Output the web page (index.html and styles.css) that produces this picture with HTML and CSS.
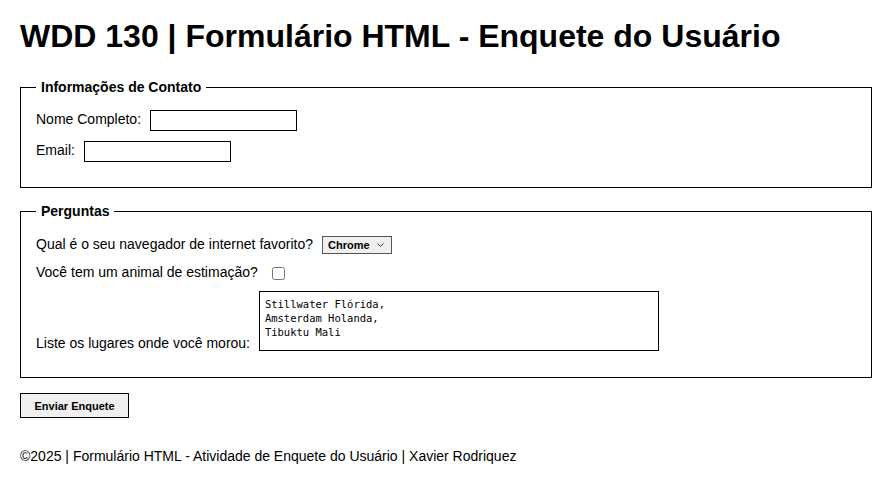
FILE: index.html
```html
<!DOCTYPE html>
<html lang="pt">
<head>
    <meta charset="UTF-8">
    <meta name="viewport" content="width=device-width, initial-scale=1.0">
    <title>WDD 130 | Formulário HTML</title>
    <link rel="stylesheet" href="styles.css">
</head>
<body>

    <h1>WDD 130 | Formulário HTML - Enquete do Usuário</h1>

    <form>
        <fieldset class="contato">
            <legend>Informações de Contato</legend>
            <div class="row">
                <label for="nome">Nome Completo:</label>
                <input type="text" id="nome">
            </div>
            <div class="row">
                <label for="email">Email:</label>
                <input type="email" id="email">
            </div>
        </fieldset>

        <fieldset class="perguntas">
            <legend>Perguntas</legend>
            <div class="row">
                <label for="navegador">Qual é o seu navegador de internet favorito?</label>
                <select id="navegador">
                    <option>Chrome</option>
                    <option>Firefox</option>
                    <option>Edge</option>
                    <option>Safari</option>
                </select>
            </div>
            <div class="row">
                <label for="animal">Você tem um animal de estimação?</label>
                <input type="checkbox" id="animal">
            </div>
            <div class="row rowText">
                <label for="lugares">Liste os lugares onde você morou:</label>
                <textarea id="lugares">Stillwater Flórida,
Amsterdam Holanda,
Tibuktu Mali</textarea>
            </div>
        </fieldset>

        <button type="submit">Enviar Enquete</button>
    </form>

    <footer>
        <p>&copy;2025 | Formulário HTML - Atividade de Enquete do Usuário | Xavier Rodriquez</p>
    </footer>

</body>
</html>
```

FILE: styles.css
```css
* {
    box-sizing: border-box;
}
body {
    margin: 0;
    padding: 0 20px;
    font-family: "Liberation Sans", Arial, sans-serif;
    font-size: 14px;
    color: #000;
}
h1 {
    font-size: 32px;
    margin: 18px 0 24px 0;
}
fieldset {
    margin: 0 0 15px 0;
    border: 1px solid #000;
}
.contato {
    padding: 15px 15px 15px 15px;
}
.perguntas {
    padding: 17px 15px 16px 15px;
}
legend {
    font-weight: bold;
    padding: 0 5px;
}
.row {
    margin-bottom: 10px;
}
.rowText {
    margin-top: 11px;
}
label {
    margin-right: 5px;
}
input[type="text"],
input[type="email"] {
    width: 147px;
    height: 21px;
    border: 1px solid #000;
    padding: 1px 2px;
    vertical-align: middle;
}
select {
    appearance: none;
    -webkit-appearance: none;
    font-family: "Liberation Sans", Arial, sans-serif;
    font-size: 11px;
    font-weight: bold;
    color: #000;
    height: 18px;
    width: 70px;
    padding: 0 0 0 5px;
    border: 1px solid #555;
    border-radius: 0;
    background-color: #efefef;
    background-image: url("data:image/svg+xml,%3Csvg xmlns='http://www.w3.org/2000/svg' width='7' height='4' viewBox='0 0 7 4'%3E%3Cpath d='M0.5 0.5 L3.5 3.5 L6.5 0.5' fill='none' stroke='%23333' stroke-width='1'/%3E%3C/svg%3E");
    background-repeat: no-repeat;
    background-position: right 7px center;
    vertical-align: middle;
}
input[type="checkbox"] {
    width: 13px;
    height: 13px;
    margin: 0 0 0 5px;
    vertical-align: middle;
}
textarea {
    width: 400px;
    height: 60px;
    border: 1px solid #000;
    padding: 5px;
    font-family: "DejaVu Sans Mono", monospace;
    font-size: 10.5px;
    line-height: 14px;
    resize: none;
    vertical-align: text-bottom;
}
button {
    font-family: "Liberation Sans", Arial, sans-serif;
    font-size: 11px;
    font-weight: bold;
    width: 109px;
    height: 25px;
    background-color: #efefef;
    border: 1px solid #000;
}
footer p {
    margin: 30px 0 0 0;
}
```
